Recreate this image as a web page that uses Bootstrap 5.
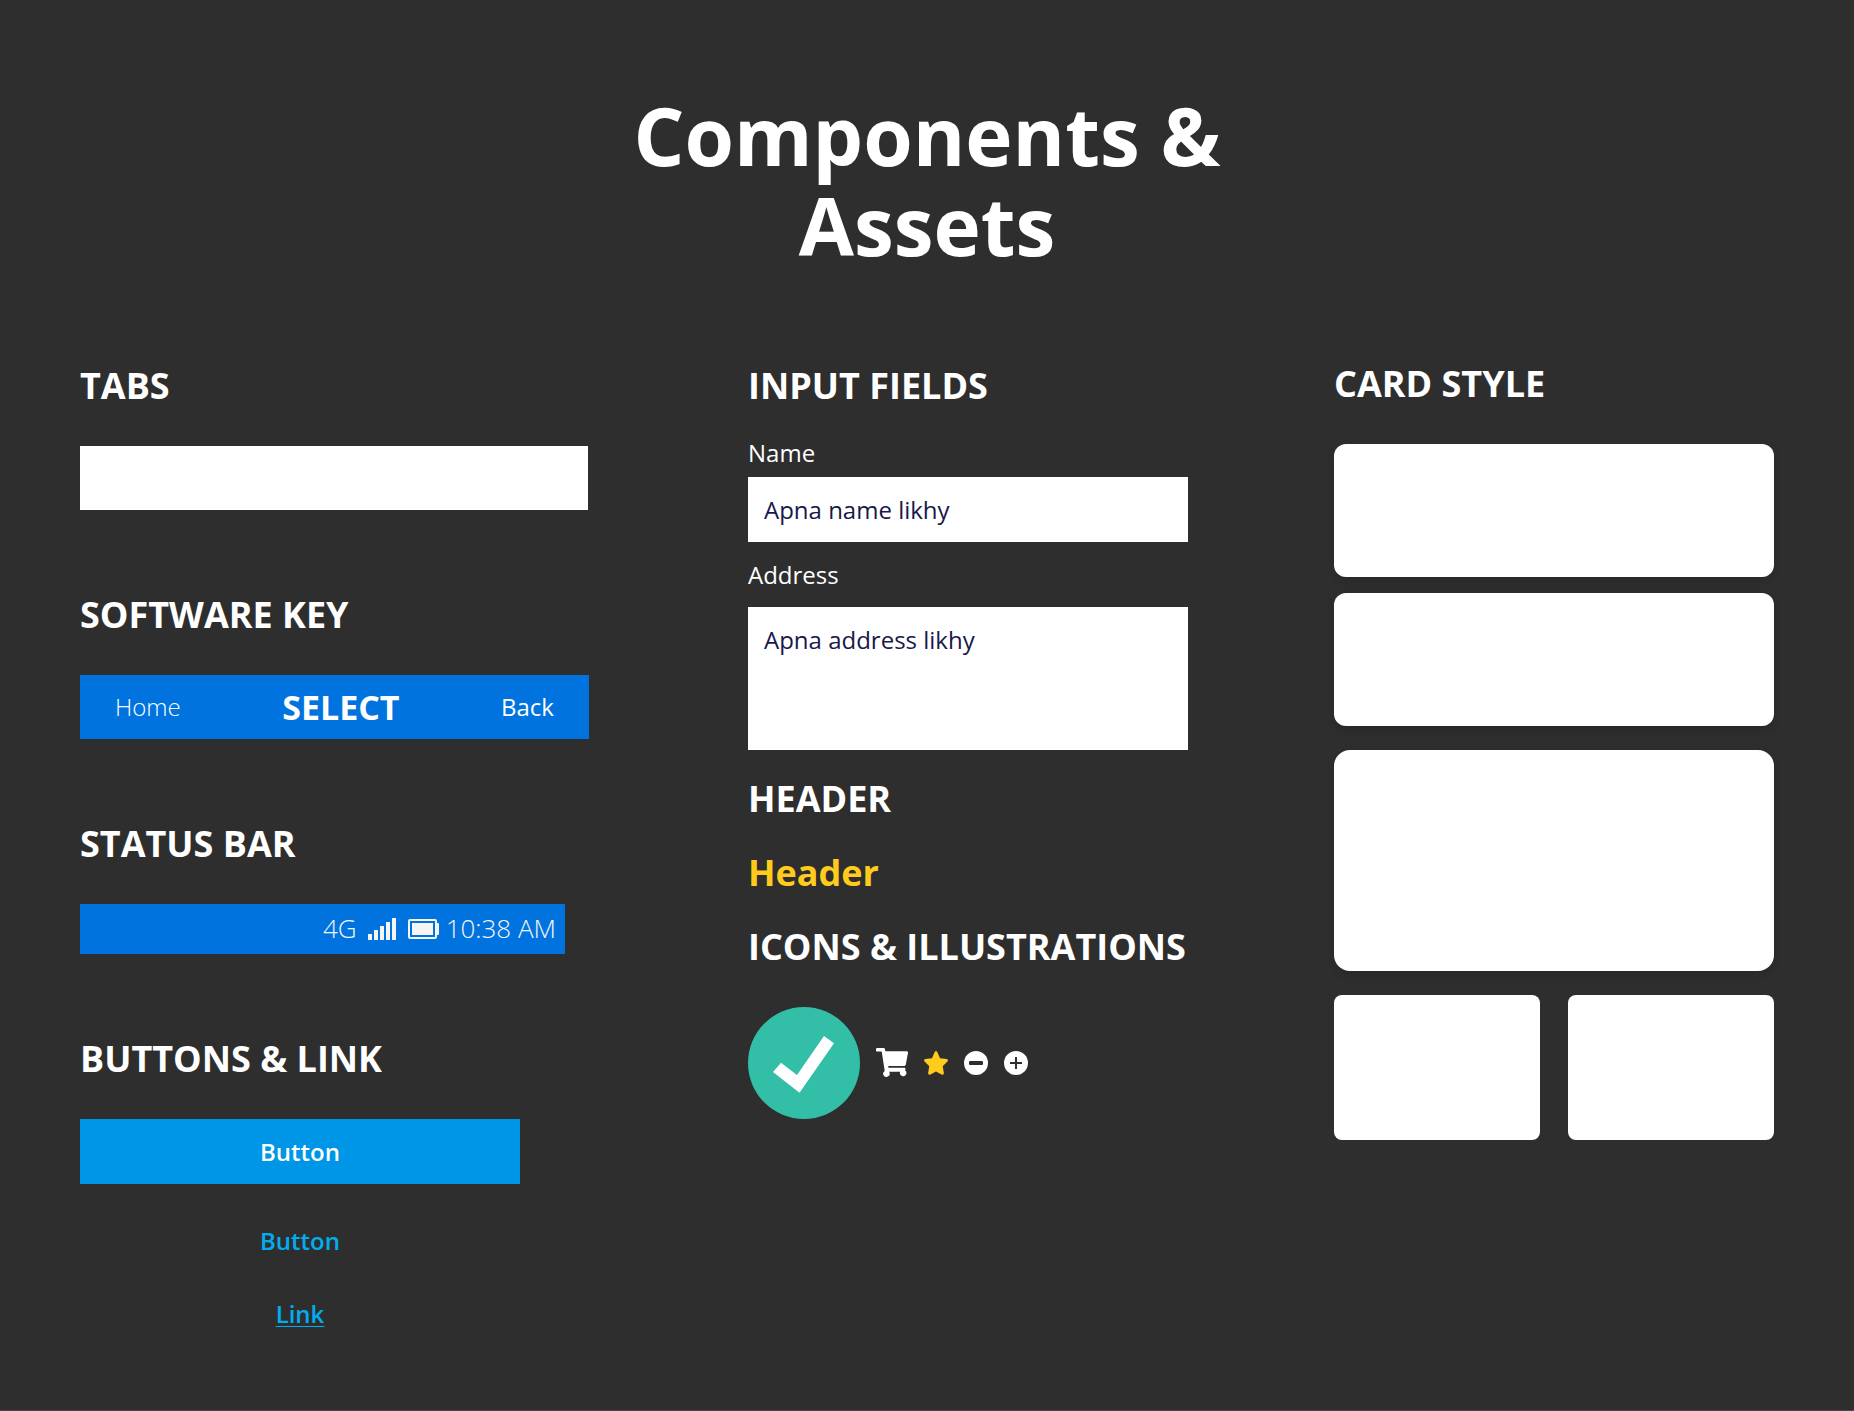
<!DOCTYPE html>
<html lang="en">
<head>
<meta charset="utf-8">
<meta name="viewport" content="width=device-width, initial-scale=1">
<title>Components &amp; Assets</title>
<link rel="stylesheet" href="https://cdn.jsdelivr.net/npm/bootstrap@5.3.0/dist/css/bootstrap.min.css">
<style>
  body { background: #2e2e2e; color: #fff; font-family: "Open Sans", sans-serif; font-size: 24px; line-height: 32px; }
  .sheet { padding: 90px 80px 0; min-height: 100vh; border-bottom: 1px solid #4a4649; }
  .sheet-title { max-width: 700px; font-size: 80px; line-height: 90px; font-weight: 700; margin-bottom: 89px; }
  .board { display: grid; grid-template-columns: 668fr 586fr 440fr; }
  .board-lowered { padding-top: 2px; }
  .section-title { font-size: 36px; line-height: 50px; font-weight: 700; margin-bottom: 35px; white-space: nowrap; }
  .stack-80 { display: flex; flex-direction: column; gap: 80px; }
  .col-narrow { width: 100%; max-width: 440px; }
  .tab-strip { max-width: 508px; height: 64px; }
  .softkeys { max-width: 509px; height: 64px; padding: 0 35px; background: #0073de; }
  .softkeys button { border: 0; padding: 0; background: none; color: #fff; }
  .softkey-main { font-size: 34px; font-weight: 700; }
  .status-strip { max-width: 485px; height: 50px; padding: 0 9px 2px 0; gap: 7px; background: #0073de; color: #f5f5f5; font-size: 26px; font-weight: 300; }
  .fw-thin { font-weight: 300; }
  .fw-mid { font-weight: 500; }
  .btn-flat { height: 65px; font-size: 24px; font-weight: 600; color: #fff; background: #0096e8; border: 0; border-radius: 0; }
  .btn-flat:hover { background: #0088d4; color: #fff; }
  .btn-plain { font-size: 24px; line-height: 32px; font-weight: 600; color: #00aeef; padding: 0; border: 0; }
  .link-plain { font-weight: 600; color: #00aeef; text-decoration: underline 1px; text-underline-offset: 3px; }
  .action-list { display: flex; flex-direction: column; align-items: center; gap: 41px; }
  .field-list { display: flex; flex-direction: column; gap: 17px; padding-top: 26px; }
  .field-label { display: block; }
  .field-box, .field-box:focus { padding: 16px; border: 0; border-radius: 0; background: #fff; color: #18184a; font-size: 24px; line-height: 33px; }
  .field-box::placeholder { color: #18184a; opacity: 1; }
  .field-area { height: 143px; resize: none; }
  .text-sun { color: #ffcc1d; }
  .panel { background: #fff; border-radius: 12px; height: 133px; box-shadow: 0 4px 8px rgba(0, 0, 0, .14); }
  .panel-lg { height: 221px; border-radius: 16px; }
  .panel-sm { height: 145px; border-radius: 8px; box-shadow: none; flex: 1; }
  .gap-28 { gap: 28px; }
  @media (max-width: 1500px) { .board { grid-template-columns: 1fr; gap: 64px; } }
</style>
<script src="https://cdn.jsdelivr.net/npm/bootstrap@5.3.0/dist/js/bootstrap.bundle.min.js"></script>
</head>
<body>
<main class="sheet">
  <h1 class="sheet-title text-center mx-auto">Components &amp; Assets</h1>
  <div class="board">

    <div class="board-lowered stack-80">
      <section>
        <h2 class="section-title">TABS</h2>
        <div class="tab-strip bg-white"></div>
      </section>
      <section>
        <h2 class="section-title">SOFTWARE KEY</h2>
        <div class="softkeys d-flex justify-content-between align-items-center">
          <button type="button" class="fw-thin">Home</button>
          <button type="button" class="softkey-main">SELECT</button>
          <button type="button" class="fw-mid">Back</button>
        </div>
      </section>
      <section>
        <h2 class="section-title">STATUS BAR</h2>
        <div class="status-strip d-flex justify-content-end align-items-center">
          <span>4G</span>
          <svg width="37" height="24" viewBox="-4 -1 37 24" fill="currentColor" aria-hidden="true"><path d="M0 17h4v6H0zM6 13h4v10H6zM12 9h4v14h-4zM18 5h4v18h-4zM24 1h4v22h-4z"/></svg>
          <svg width="31" height="22" viewBox="0 0 31 22" aria-hidden="true"><rect x="1" y="3" width="27" height="18" rx="1" fill="none" stroke="currentColor" stroke-width="2"/><rect x="4" y="6" width="21" height="12" fill="currentColor"/><path d="M28 6h2q1 0 1 1v10q0 1-1 1h-2z" fill="currentColor"/></svg>
          <span>10:38 AM</span>
        </div>
      </section>
      <section class="col-narrow">
        <h2 class="section-title">BUTTONS &amp; LINK</h2>
        <div class="action-list">
          <button type="button" class="btn btn-flat w-100">Button</button>
          <button type="button" class="btn btn-plain">Button</button>
          <a href="#" class="link-plain">Link</a>
        </div>
      </section>
    </div>

    <div class="board-lowered col-narrow">
      <section class="mb-4">
        <h2 class="section-title mb-0">INPUT FIELDS</h2>
        <form class="field-list">
          <div>
            <label class="field-label mb-2" for="name">Name</label>
            <input class="form-control field-box" type="text" id="name" placeholder="Apna name likhy">
          </div>
          <div>
            <label class="field-label mb-3" for="address">Address</label>
            <textarea class="form-control field-box field-area" id="address" placeholder="Apna address likhy"></textarea>
          </div>
        </form>
      </section>
      <section class="mb-4">
        <h2 class="section-title mb-4">HEADER</h2>
        <h3 class="section-title text-sun mb-0">Header</h3>
      </section>
      <section>
        <h2 class="section-title">ICONS &amp; ILLUSTRATIONS</h2>
        <div class="d-flex align-items-center gap-3">
          <svg width="112" height="112" viewBox="0 0 112 112" role="img" aria-label="Done"><circle cx="56" cy="56" r="56" fill="#33bea8"/><path d="M25 65l8-9.300 16 12.300 27-39 10 7.300-34.500 49.500z" fill="#fff"/></svg>
          <svg width="32" height="30" viewBox="0 0 32 30" fill="#fff" role="img" aria-label="Cart"><path d="M1.200 0H7.500Q8.800 0 9 1.200L9.400 3.300H30.700Q32.200 3.300 32 4.800L29.800 16.500Q29.500 18 28 18H12.200L12.500 19.700H28.500Q29.600 19.700 29.400 21L29.200 22.600A3.200 3.200 0 1 1 24.200 23.800H13A3.200 3.200 0 1 1 8.700 23L5.700 3.600H1.200Q0 3.600 0 2.400V1.200Q0 0 1.200 0z"/></svg>
          <svg width="24" height="24" viewBox="0 0 24 24" fill="#ffcc1d" role="img" aria-label="Star"><path d="M10.700 1Q12-.8 13.300 1L16 7.200 22.700 8.100Q24.800 8.600 23.400 10.400L18.700 15.200 19.900 22Q19.900 24.200 18 23.700L12 20.500 6 23.700Q4.100 24.200 4.100 22L5.300 15.200 .6 10.400Q-.8 8.600 1.300 8.100L8 7.200z"/></svg>
          <svg width="24" height="24" viewBox="0 0 24 24" role="img" aria-label="Remove"><circle cx="12" cy="12" r="12" fill="#fff"/><rect x="5" y="10" width="14" height="4" rx="1" fill="#2e2e2e"/></svg>
          <svg width="24" height="24" viewBox="0 0 24 24" role="img" aria-label="Add"><circle cx="12" cy="12" r="12" fill="#fff"/><path d="M12 6v12M6 12h12" stroke="#2e2e2e" stroke-width="2"/></svg>
        </div>
      </section>
    </div>

    <section class="col-narrow">
      <h2 class="section-title">CARD STYLE</h2>
      <div class="panel mb-3"></div>
      <div class="panel mb-4"></div>
      <div class="panel panel-lg mb-4"></div>
      <div class="d-flex gap-28">
        <div class="panel panel-sm"></div>
        <div class="panel panel-sm"></div>
      </div>
    </section>

  </div>
</main>
</body>
</html>
